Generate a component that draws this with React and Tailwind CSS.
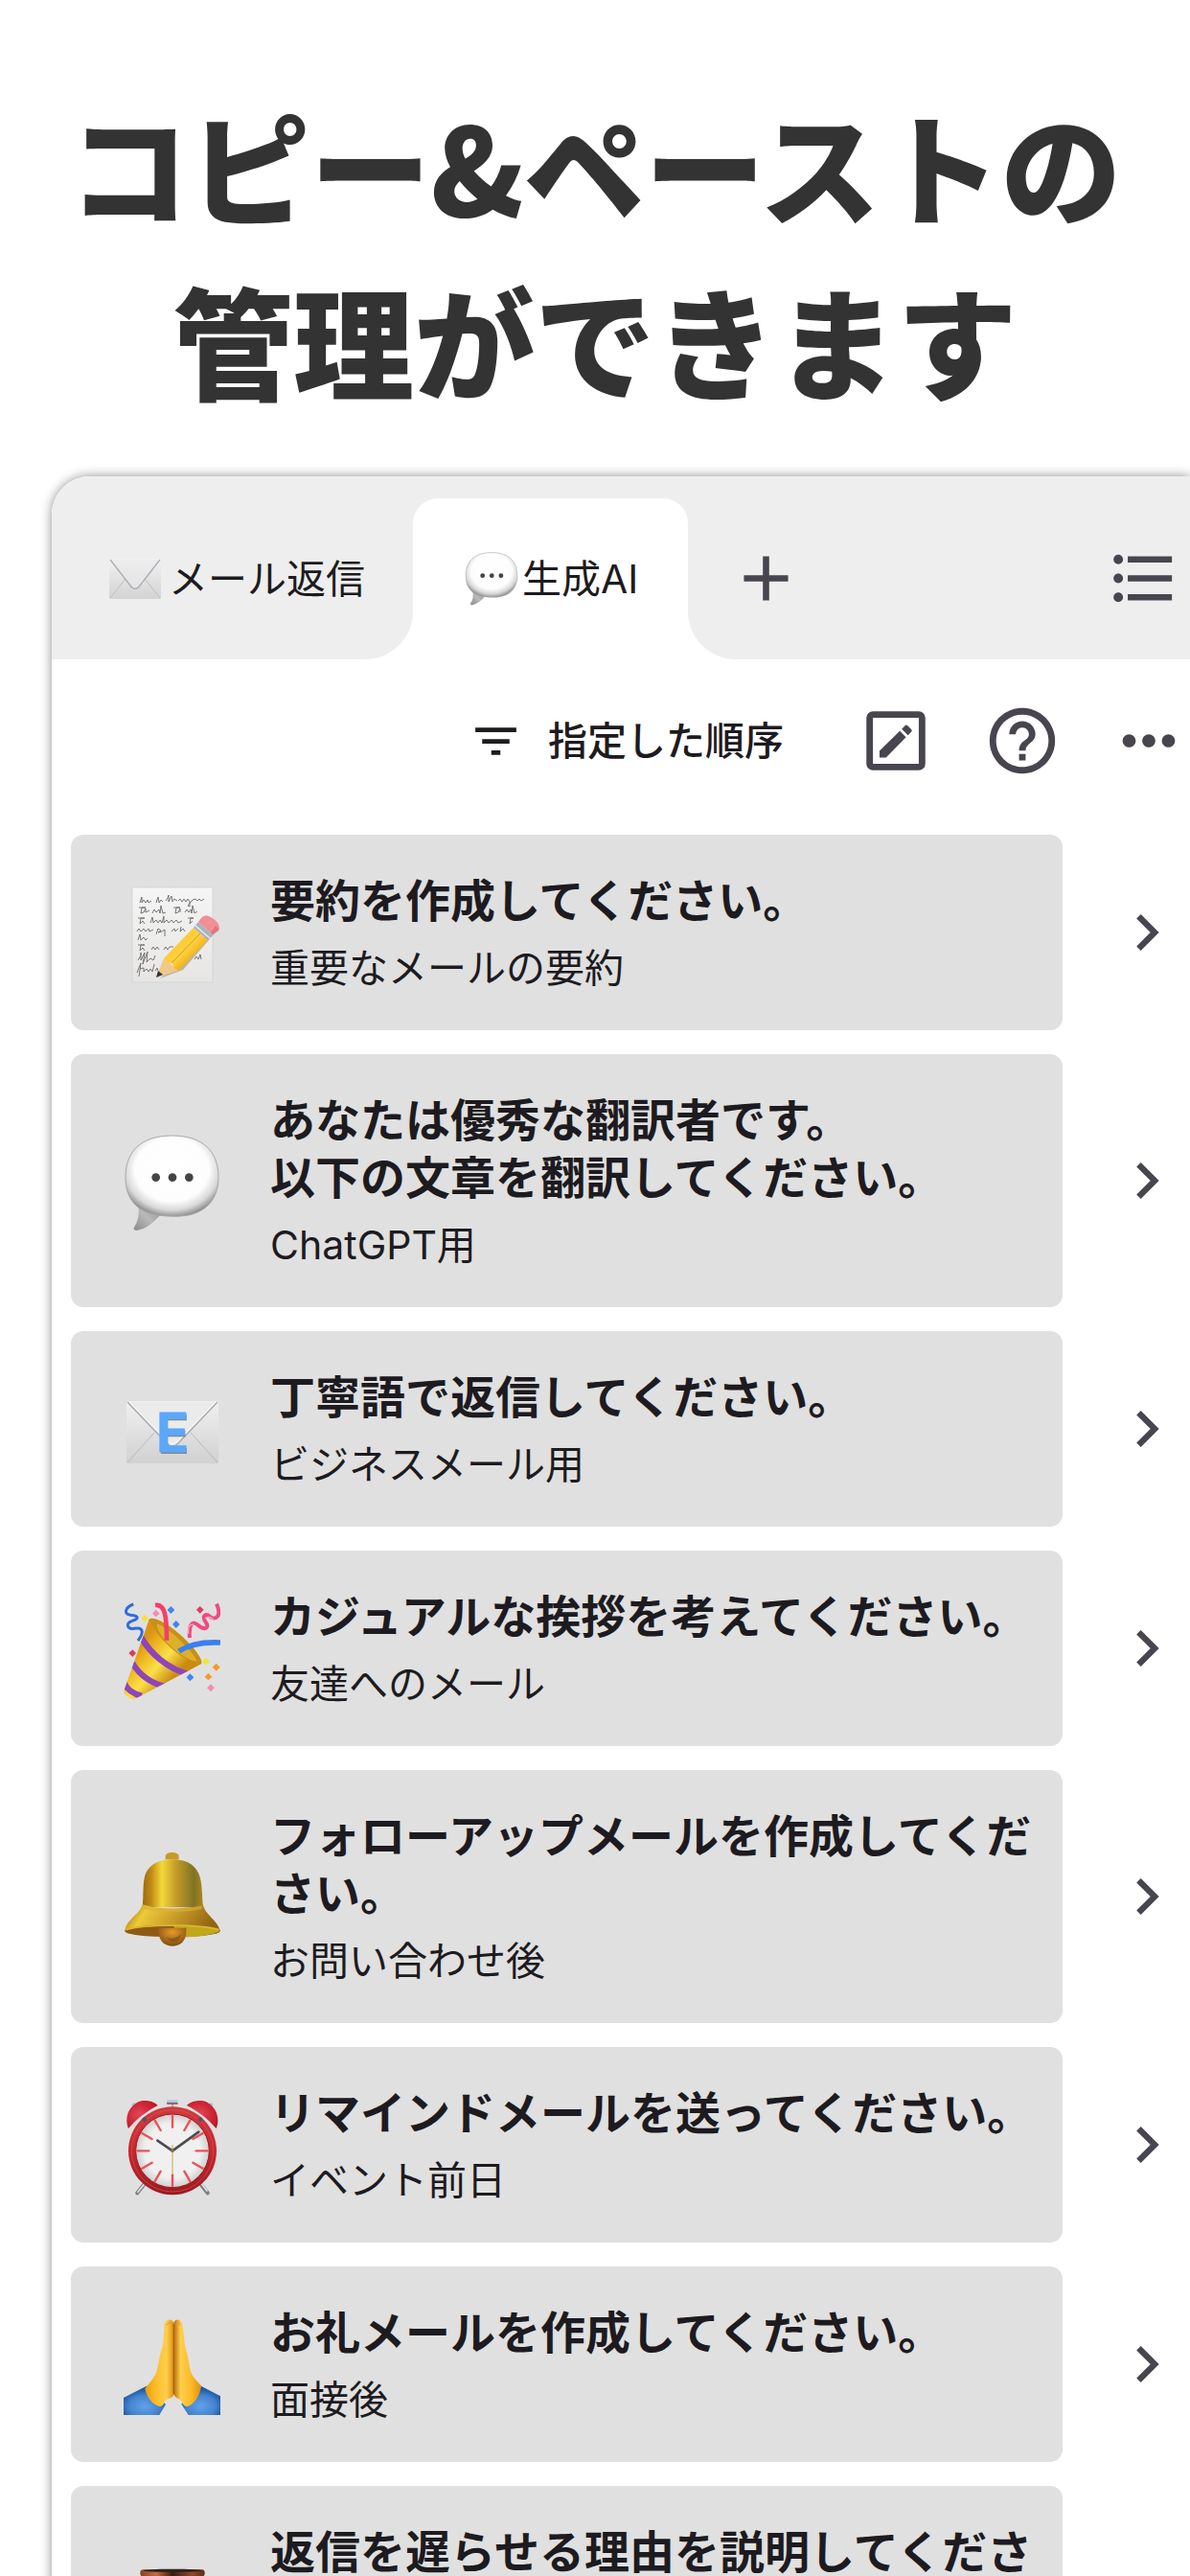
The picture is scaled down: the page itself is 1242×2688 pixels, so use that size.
import {
  MdAdd,
  MdChevronRight,
  MdFilterList,
  MdFormatListBulleted,
  MdHelpOutline,
  MdMoreHoriz,
} from "react-icons/md";

function EditBoxIcon({ className }) {
  return (
    <svg viewBox="0 0 24 24" className={className} fill="currentColor" aria-hidden="true">
      <rect x="4" y="4" width="16" height="16" rx="1" fill="none" stroke="currentColor" strokeWidth="2" />
      <path d="M7 17v-1.9l6.2-6.1 1.9 1.9L9 17.1H7z" />
      <path d="M13.8 8.4l1-1q.4-.4.8 0l1.1 1.1q.4.4 0 .8l-1 1z" />
    </svg>
  );
}

function EnvelopeIcon({ className }) {
  return (
    <svg viewBox="0 0 54 42" preserveAspectRatio="none" className={className} aria-hidden="true">
      <defs>
        <linearGradient id="env" x1="0" y1="0" x2="0" y2="1">
          <stop offset="0" stopColor="#f2f2f2" />
          <stop offset="1" stopColor="#d3d3d3" />
        </linearGradient>
      </defs>
      <rect width="54" height="42" rx="1" fill="url(#env)" />
      <path d="M1 41l16-20M53 41L37 21" stroke="#bdbdbd" strokeWidth="1" fill="none" />
      <path d="M1 1l21 27q5 7 10 0L53 1" stroke="#aeb0b8" strokeWidth="1.4" fill="#eaeaea" fillOpacity=".6" />
    </svg>
  );
}

function BubbleIcon({ className }) {
  return (
    <svg viewBox="0 0 102 102" className={className} aria-hidden="true">
      <defs>
        <radialGradient id="bubble" cx=".5" cy=".42" r=".6">
          <stop offset="0" stopColor="#fff" />
          <stop offset=".66" stopColor="#fdfdfd" />
          <stop offset=".84" stopColor="#d8d8d8" />
          <stop offset="1" stopColor="#858585" />
        </radialGradient>
        <linearGradient id="bubbleTail" x1="1" y1="0" x2="0" y2="1">
          <stop offset="0" stopColor="#8d8d8d" />
          <stop offset=".5" stopColor="#b9b9b9" />
          <stop offset="1" stopColor="#8a8a8a" />
        </linearGradient>
      </defs>
      <path d="M15 74q3 13-4 24-1 3 3 3 13-2 25-17z" fill="url(#bubbleTail)" />
      <path
        d="M51 1C83 1 100 17 100 45c0 27-18 41-44 41-6 0-12 0-18-1C14 82 2 68 2 45 2 17 19 1 51 1z"
        fill="url(#bubble)"
        stroke="#a8a8a8"
        strokeWidth="1"
      />
      <g fill="#444">
        <circle cx="34" cy="45" r="4.4" />
        <circle cx="51.500" cy="45" r="4.4" />
        <circle cx="69" cy="45" r="4.4" />
      </g>
    </svg>
  );
}

function MemoIcon({ className }) {
  return (
    <svg viewBox="0 0 101 101" className={className} aria-hidden="true">
      <defs>
        <linearGradient id="paper" x1="0" y1="0" x2="0" y2="1">
          <stop offset="0" stopColor="#f5f5f5" />
          <stop offset="1" stopColor="#e6e5e3" />
        </linearGradient>
        <linearGradient id="pencil" x1="0" y1="0" x2="1" y2="1">
          <stop offset=".2" stopColor="#fbc52c" />
          <stop offset=".5" stopColor="#ffd23f" />
          <stop offset=".8" stopColor="#e09a0c" />
        </linearGradient>
      </defs>
      <rect x="9" y="1" width="84" height="99" fill="url(#paper)" stroke="#d2d2d2" strokeWidth=".8" />
      <g fill="none" stroke="#6a6a6a" strokeWidth=".9" strokeLinejoin="round">
        <path d="M17 17l2-6 0 6 2-3 2 3 2-3 1 3 3-2M34 17l2-6 1 6 2-3 2 2M44 15l2-3 1-3 0 7 3-6 1 6 2-3 3 2M57 15l2-2 2 3 2-3 2 3 2-3 2 3 0 5-2-1 5-6 3-1 2 2 2-2 2 2 3-2" />
        <path d="M16 22h7l-4 0-1 6 3-1 2-4 0 4 4-2M30 28l2-4 2 3 3-3 1 4 1-8 2 8 3-1M52 22h7l-4 0-1 6 3-1 2-4 0 4M64 27l2-3 2 3 2-3 1 4 1-8 2 8 3-2" />
        <path d="M15 33h7l-4 0-1 6 3-3 2 3M28 38l2-6 1 6 3-3 2 3 2-3 2 3 2-7 0 7 3-3 2 3 3-3 2 3 3-3 2 3 4-2M67 33h6l-3 0-1 6 3-3" />
        <path d="M14 47l2-3 2 3 3-3 2 3 3-3 1 3 4-2M34 50l2-6 3 2-3 2 4-1 3-2 0 7M50 47l3-3 1 3 3-3M60 42l-1 5 3-3 2 3" />
        <path d="M15 56l2-6 1 6 3-3 2 3 2-2" />
        <path d="M15 61h7l-4 0-1 6 3-3 2 3M29 66l2-3 2 3 2-3 2 3M42 66l2-3 2 3 2-3 4 0" />
        <path d="M15 77l3-5 0-3 0 8 4-8-2 12 5-13-1 11 4-4 3 2 2-5M74 76l2-3 2 3 2-5 1 5" />
        <path d="M14 90l4-10-2 14M17 86l4-1 0 4 3-3 2 3 2-3 2 3 2-8M33 88l2-3 1 3" />
      </g>
      <path d="M38 96l24-9 33-38-4-4-24 24z" fill="#555" opacity=".35" />
      <path d="M34 95l8-20 15 13z" fill="#f0c987" />
      <path d="M34 95l2-7 5 4z" fill="#33343a" />
      <path d="M42 75l31-32 15 13-30 32-5-2-2-6-5 0z" fill="url(#pencil)" />
      <path d="M50 80l30-31" stroke="#d99a10" strokeWidth="1" />
      <path d="M73 43l5-6 15 13-5 6z" fill="#a9b3bd" />
      <path d="M75 41l15 13" stroke="#e5edf3" strokeWidth="1.4" />
      <path d="M78 37l3-4q4-5 10-1 9 5 9 12 0 2-3 3l-4 3z" fill="#f08f95" />
      <path d="M91 48l5-7 3 3q1 3-6 6z" fill="#d8636c" opacity=".6" />
    </svg>
  );
}

function EmailIcon({ className }) {
  return (
    <svg viewBox="0 0 101 101" className={className} aria-hidden="true">
      <defs>
        <linearGradient id="mail" x1="0" y1="0" x2="0" y2="1">
          <stop offset="0" stopColor="#f0f0f0" />
          <stop offset="1" stopColor="#d1d1d1" />
        </linearGradient>
      </defs>
      <rect x="3" y="19" width="96" height="65" rx="1.500" fill="url(#mail)" />
      <path d="M4 83l28-31M98 83L70 52" stroke="#b9b9b9" strokeWidth="1" />
      <path d="M4 20l41 43q6 6 12 0l41-43" fill="#ebebeb" stroke="#a9aab0" strokeWidth="1.4" />
      <path d="M6 20l40 41q5 5 10 0l40-41" fill="none" stroke="#fafaff" strokeWidth=".9" />
      <g fontFamily="Inter, sans-serif" fontWeight="600" fontSize="57" textAnchor="middle">
        <text x="52" y="74" fill="#666" opacity=".7">E</text>
        <text x="51" y="72" fill="#5aa8fb" stroke="#5aa8fb" strokeWidth="1" strokeLinejoin="round">E</text>
      </g>
    </svg>
  );
}

function PartyIcon({ className }) {
  return (
    <svg viewBox="207 181 303 303" className={className} aria-hidden="true">
      <defs>
        <linearGradient id="cone" x1="240" y1="330" x2="350" y2="430" gradientUnits="userSpaceOnUse">
          <stop offset="0" stopColor="#d99413" />
          <stop offset=".3" stopColor="#f0bb25" />
          <stop offset=".6" stopColor="#fbe04a" />
          <stop offset="1" stopColor="#c98a12" />
        </linearGradient>
        <clipPath id="coneShape">
          <path d="M287 234c20 50 95 130 163 140L246 482c-14 6-38-8-38-24z" />
        </clipPath>
      </defs>
      <path d="M287 234c10-12 60 12 105 55s66 76 58 85c-30 6-70-20-110-58s-60-70-53-82z" fill="#c98f16" />
      <path d="M312 248c30 12 60 40 84 64 22 22 40 46 40 54-30-4-70-34-96-62-18-20-32-44-28-56z" fill="#ddb02c" />
      <path d="M287 234c20 50 95 130 163 140L246 482c-14 6-38-8-38-24z" fill="url(#cone)" />
      <g clipPath="url(#coneShape)" fill="none" stroke="#8f45b8" strokeWidth="19">
        <path d="M262 290c28 50 82 100 150 116" />
        <path d="M234 370c20 34 54 62 100 74" />
        <path d="M208 432c8 20 30 36 56 42" />
      </g>
      <path d="M306 190c30-4 36 30 36 110" fill="none" stroke="#f43f66" strokeWidth="14" />
      <path d="M380 334c30-20 70-30 130-27" fill="none" stroke="#3b7ff0" strokeWidth="17" />
      <path
        d="M238 187c-24 8-34 30-10 34 30 2 26 12 6 18-24 8-14 28 6 24 26-4 34 8 12 38"
        fill="none"
        stroke="#2f6be0"
        strokeWidth="9"
      />
      <path
        d="M414 292c-4-40 8-56 26-40 20 18 36 10 26-6-18-26 0-30 12-20 16 12 38 0 20-40"
        fill="none"
        stroke="#ee4b80"
        strokeWidth="12"
      />
      <path d="M410 280c-2-26 6-32 18-28M462 232c8-8 18-4 26 2" fill="none" stroke="#f9a3c3" strokeWidth="4" />
      <path d="M273 219l11 12-11 11-11-11zM465 354l12 12-12 11-11-11z" fill="#f6e32e" />
      <path d="M308 204l12 12-12 11-11-11zM480 437l12 12-12 12-12-12z" fill="#f78bb8" />
      <path d="M355 193l12 12-12 12-11-12zM371 238l12 12-12 12-11-12zM415 404l12 12-12 12-11-12z" fill="#3b86f2" />
      <path d="M446 193l12 11-12 12-11-12zM235 329l11 11-11 12-12-12z" fill="#df3c62" />
      <path d="M497 372l12 12-12 12-12-12zM472 402l12 12-12 11-11-11z" fill="#f59a2c" />
    </svg>
  );
}

function BellIcon({ className }) {
  return (
    <svg viewBox="207 268 303 303" className={className} aria-hidden="true">
      <defs>
        <linearGradient id="bell">
          <stop offset="0" stopColor="#9c6a0d" />
          <stop offset=".15" stopColor="#c08c14" />
          <stop offset=".32" stopColor="#f3d93a" />
          <stop offset=".55" stopColor="#c69c28" />
          <stop offset=".85" stopColor="#7d7424" />
          <stop offset="1" stopColor="#b08418" />
        </linearGradient>
        <linearGradient id="bellRim" x1="0" y1="0" x2="1" y2=".2">
          <stop offset="0" stopColor="#8d5c0c" />
          <stop offset=".25" stopColor="#eccb38" />
          <stop offset=".6" stopColor="#c89a28" />
          <stop offset="1" stopColor="#936511" />
        </linearGradient>
        <radialGradient id="clapper" cx=".5" cy=".25" r=".75">
          <stop offset="0" stopColor="#e69a28" />
          <stop offset=".5" stopColor="#b0701c" />
          <stop offset="1" stopColor="#7c4c12" />
        </radialGradient>
      </defs>
      <path d="M338 296v-10c0-16 42-16 42 0v10z" fill="#c79a26" />
      <path
        d="M266 446c4-40 0-80 10-106 14-32 48-44 84-44s68 12 82 44c12 26 10 66 14 106z"
        fill="url(#bell)"
      />
      <path
        d="M266 436c-6 30-46 44-55 80 0 8 10 14 24 12 80-8 180-8 250 0 14 2 24-4 24-10-10-34-48-50-54-82-40 18-148 18-189 0z"
        fill="url(#bellRim)"
      />
      <path d="M270 446c50 12 132 12 182 0" stroke="#d8b13c" strokeWidth="10" fill="none" opacity=".6" />
      <ellipse cx="360" cy="520" rx="149" ry="19" fill="#8e5a15" />
      <path d="M360 501c84 0 136 8 148 19-20 12-70 19-120 19z" fill="#c0a81a" />
      <path d="M214 516c60-18 230-18 292 0" stroke="#dcb731" strokeWidth="5" fill="none" />
      <path d="M317 510h86v14c0 58-86 58-86 0z" fill="url(#clapper)" />
      <path d="M338 538q20 14 50-8-10 32-36 20z" fill="#6a451c" opacity=".5" />
    </svg>
  );
}

const TICKS = [0, 30, 60, 90, 120, 150, 180, 210, 240, 270, 300, 330];

function ClockIcon({ className }) {
  return (
    <svg viewBox="207 175 303 303" className={className} aria-hidden="true">
      <defs>
        <linearGradient id="ring" x1="0" y1="0" x2="0" y2="1">
          <stop offset="0" stopColor="#cf3a40" />
          <stop offset=".5" stopColor="#c8272d" />
          <stop offset="1" stopColor="#981c20" />
        </linearGradient>
        <radialGradient id="bellCap" cx=".4" cy=".5" r=".7">
          <stop offset="0" stopColor="#e2485a" />
          <stop offset=".6" stopColor="#cc2634" />
          <stop offset="1" stopColor="#b51720" />
        </radialGradient>
        <radialGradient id="face">
          <stop offset=".75" stopColor="#f0f0f0" />
          <stop offset="1" stopColor="#cfcfcf" />
        </radialGradient>
      </defs>
      <path d="M276 437l-26 33M444 437l26 33" stroke="#7d7f83" strokeWidth="12" strokeLinecap="round" />
      <path d="M274 439l-22 28M448 437l20 26" stroke="#dfe4ea" strokeWidth="5" strokeLinecap="round" />
      <path d="M234 196l10-6M486 196l-10-6" stroke="#a9c3d8" strokeWidth="9" />
      <path d="M360 190v20" stroke="#a5a9ad" strokeWidth="6" />
      <rect x="342" y="178" width="35" height="15" rx="4" fill="#b3cfe3" />
      <rect x="342" y="186" width="35" height="7" rx="3" fill="#a1626a" />
      <circle cx="360" cy="338" r="138" fill="url(#ring)" />
      <circle cx="360" cy="338" r="128" fill="none" stroke="#e0565b" strokeWidth="3" opacity=".6" />
      <circle cx="360" cy="338" r="115" fill="url(#face)" stroke="#9b1c20" strokeWidth="3" />
      {TICKS.map((deg) => (
        <path
          key={deg}
          d="M360 228v36"
          stroke="#ea5156"
          strokeWidth="7"
          strokeLinecap="round"
          transform={`rotate(${deg} 360 338)`}
        />
      ))}
      <path d="M276 236l-8 8M444 236l8 8" stroke="#4e5560" strokeWidth="13" />
      <path d="M222 268c-16-40 8-78 40-86 22-4 44 4 52 14-34 18-64 40-92 72z" fill="url(#bellCap)" />
      <path d="M497 268c16-40-8-78-40-86-22-4-44 4-52 14 34 18 64 40 92 72z" fill="url(#bellCap)" />
      <path d="M360 320v92" stroke="#dcc08c" strokeWidth="5" />
      <path d="M360 338l-47-32M360 338l82-59" stroke="#4b4d4f" strokeWidth="8" strokeLinecap="round" />
      <circle cx="360" cy="338" r="5" fill="#8a7346" />
    </svg>
  );
}

function PrayIcon({ className }) {
  return (
    <svg viewBox="207 174 303 303" className={className} aria-hidden="true">
      <defs>
        <linearGradient id="handL">
          <stop offset="0" stopColor="#e89b12" />
          <stop offset=".4" stopColor="#fdbf2b" />
          <stop offset=".75" stopColor="#ffcf4c" />
          <stop offset="1" stopColor="#dc9012" />
        </linearGradient>
        <linearGradient id="handR">
          <stop offset="0" stopColor="#b86c0c" />
          <stop offset=".25" stopColor="#ffcf4c" />
          <stop offset=".65" stopColor="#fbb925" />
          <stop offset="1" stopColor="#df8f10" />
        </linearGradient>
        <radialGradient id="sleeve" cx=".5" cy=".7" r=".6">
          <stop offset="0" stopColor="#62a1ea" />
          <stop offset=".6" stopColor="#4585d0" />
          <stop offset="1" stopColor="#1c569f" />
        </radialGradient>
      </defs>
      <path d="M207 423l72-37 60 58-20 33H207z" fill="url(#sleeve)" />
      <path d="M510 418l-64-33-58 58 22 34h100z" fill="url(#sleeve)" />
      <path
        d="M364 190c-2-14-24-16-28 0-4 26-2 58-10 84-8 16-8 46-16 68-8 22-24 36-36 52 4 26 22 50 46 56 16-2 12-16 22-22 10-4 22-6 22-16z"
        fill="url(#handL)"
      />
      <path
        d="M364 190c2-14 22-16 26 0 6 26 6 60 12 84 10 24 8 50 18 74 8 16 20 26 30 38-4 32-24 60-44 64-14 2-14-16-22-20-8-6-20-10-20-22z"
        fill="url(#handR)"
      />
      <path d="M364 192v220" stroke="#a9620c" strokeWidth="4" />
      <path d="M341 196q8-12 17-4M370 192q9-8 15 4" stroke="#e09a1c" strokeWidth="3" fill="none" />
    </svg>
  );
}

function UrnIcon({ className }) {
  return (
    <svg viewBox="207 947 303 303" className={className} aria-hidden="true">
      <defs>
        <linearGradient id="urn">
          <stop offset="0" stopColor="#8a4324" />
          <stop offset=".25" stopColor="#c26a42" />
          <stop offset=".5" stopColor="#3a1a0e" />
          <stop offset=".8" stopColor="#8f4a2c" />
          <stop offset="1" stopColor="#5c2c18" />
        </linearGradient>
      </defs>
      <path d="M280 984h160c-10 40 50 50 50 120 0 60-50 100-90 140h-80c-40-40-90-80-90-140 0-70 60-80 50-120z" fill="url(#urn)" />
      <rect x="259" y="957" width="202" height="22" rx="10" fill="url(#urn)" />
      <ellipse cx="360" cy="960" rx="92" ry="5" fill="#2f211b" />
    </svg>
  );
}

const ITEMS = [
  { icon: MemoIcon, title: "要約を作成してください。", note: "重要なメールの要約" },
  {
    icon: BubbleIcon,
    title: "あなたは優秀な翻訳者です。\n以下の文章を翻訳してください。",
    note: "ChatGPT用",
  },
  { icon: EmailIcon, title: "丁寧語で返信してください。", note: "ビジネスメール用" },
  { icon: PartyIcon, title: "カジュアルな挨拶を考えてください。", note: "友達へのメール" },
  { icon: BellIcon, title: "フォローアップメールを作成してください。", note: "お問い合わせ後" },
  { icon: ClockIcon, title: "リマインドメールを送ってください。", note: "イベント前日" },
  { icon: PrayIcon, title: "お礼メールを作成してください。", note: "面接後" },
  { icon: UrnIcon, title: "返信を遅らせる理由を説明してください。", note: "" },
];

function TabBar() {
  return (
    <nav className="flex h-[191px] rounded-tl-[40px] bg-white text-[41px] leading-[60px]">
      <button
        type="button"
        className="flex items-center gap-2 rounded-tl-[40px] rounded-br-[50px] bg-[#eeeeee] pt-[22px] pr-[50px] pl-[60px]"
      >
        <EnvelopeIcon className="h-[42px] w-[54px]" />
        メール返信
      </button>
      <div className="bg-[#eeeeee] pt-[23px]">
        <button
          type="button"
          aria-current="page"
          className="flex h-full items-center gap-1 rounded-t-[26px] bg-white pr-[52px] pl-[54px]"
        >
          <BubbleIcon className="size-[56px]" />
          生成AI
        </button>
      </div>
      <div className="flex flex-1 items-center justify-between rounded-bl-[50px] bg-[#eeeeee] pt-[22px] pr-[9px] pl-[42px] text-[#49454f]">
        <button type="button" aria-label="タブを追加">
          <MdAdd className="size-[79px]" />
        </button>
        <button type="button" aria-label="一覧">
          <MdFormatListBulleted className="size-[79px]" />
        </button>
      </div>
    </nav>
  );
}

function Toolbar() {
  return (
    <div className="flex h-[170px] items-center justify-end gap-[50px] pr-[2px] text-[#49454f]">
      <button
        type="button"
        className="mr-[26px] flex items-center gap-[26px] text-[41px] leading-[60px] font-medium text-[#1d1b20]"
      >
        <MdFilterList className="size-[57px]" />
        指定した順序
      </button>
      <button type="button" aria-label="編集">
        <EditBoxIcon className="size-[82px]" />
      </button>
      <button type="button" aria-label="ヘルプ">
        <MdHelpOutline className="size-[82px]" />
      </button>
      <button type="button" aria-label="その他">
        <MdMoreHoriz className="size-[82px]" />
      </button>
    </div>
  );
}

function PhraseRow({ item }) {
  const Icon = item.icon;

  return (
    <li className="flex items-stretch">
      <button
        type="button"
        className="flex flex-1 items-center gap-[52px] rounded-[13px] bg-[#e0e0e0] pt-[39px] pr-[24px] pb-[35px] pl-[55px] text-left"
      >
        <Icon className="size-[101px] shrink-0" />
        <span className="flex-1">
          <span className="block text-[47px] leading-[60px] font-semibold whitespace-pre-line">
            {item.title}
          </span>
          <span className="mt-[10px] block min-h-[60px] text-[41px] leading-[60px]">
            {item.note}
          </span>
        </span>
      </button>
      <button type="button" aria-label="詳細" className="pr-[7px] pl-[50px] text-[#49454f]">
        <MdChevronRight className="size-[76px]" />
      </button>
    </li>
  );
}

export default function App() {
  return (
    <div className="h-screen overflow-hidden bg-white pt-[80px] font-['Inter','Noto_Sans_CJK_JP',sans-serif] text-[#1d1b20]">
      <h1 className="text-center font-['Noto_Sans_CJK_JP',sans-serif] text-[126px] leading-[182px] font-black text-[#333333]">
        コピー&amp;ペーストの
        <br />
        管理ができます
      </h1>

      <main className="mt-[53px] ml-[54px] rounded-tl-[40px] bg-white shadow-[0_0_12px_rgba(0,0,0,0.45)]">
        <TabBar />
        <Toolbar />
        <ul className="flex flex-col gap-[25px] pt-[13px] pb-[25px] pl-[20px]">
          {ITEMS.map((item) => (
            <PhraseRow key={item.title} item={item} />
          ))}
        </ul>
      </main>
    </div>
  );
}
